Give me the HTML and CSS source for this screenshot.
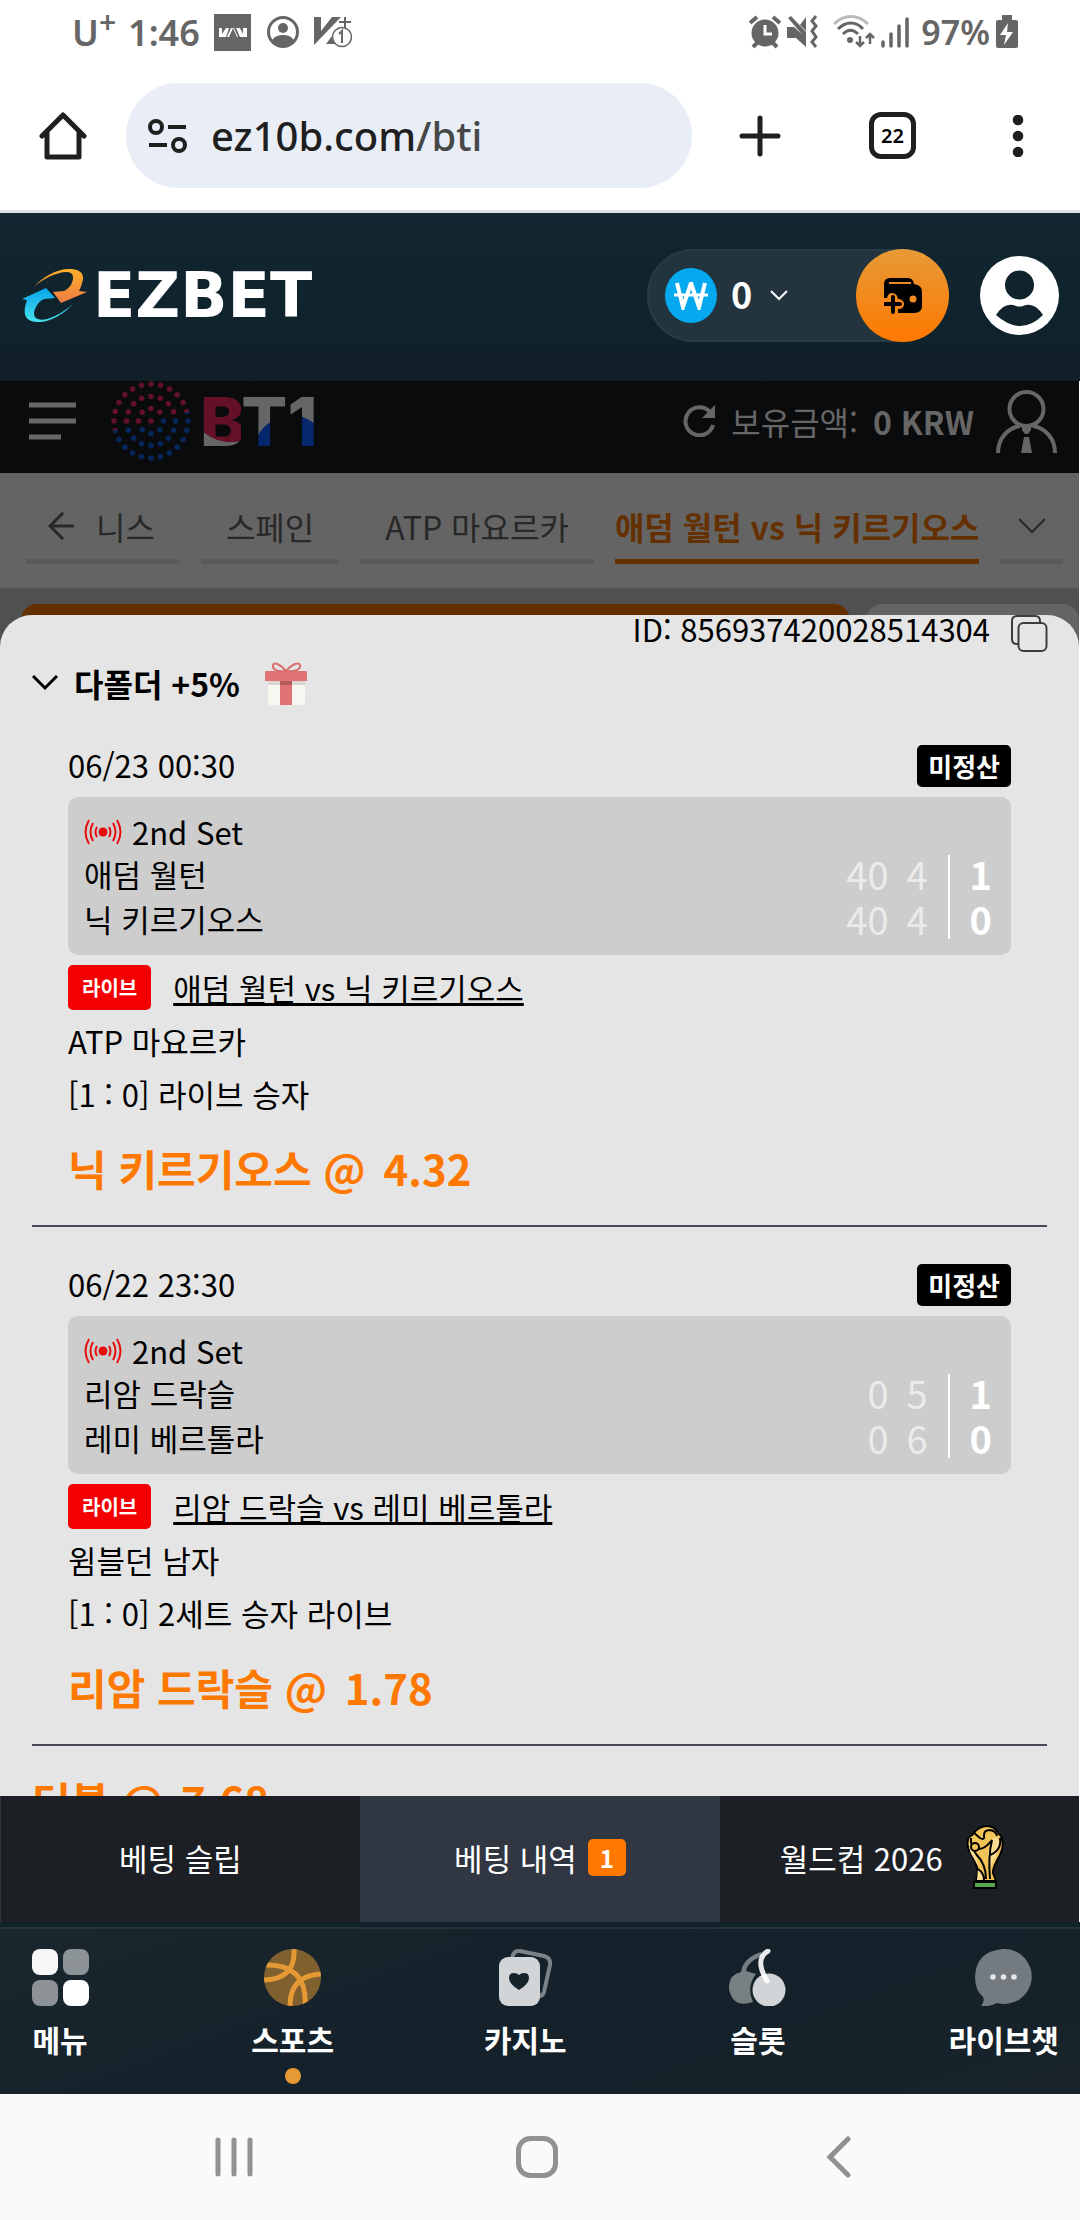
FILE: index.html
```html
<!DOCTYPE html>
<html lang="ko">
  <head>
    <meta charset="UTF-8" />
    <meta name="viewport" content="width=device-width, initial-scale=1" />
    <title>EZBET - 베팅 내역</title>
    <link rel="stylesheet" href="styles.css">
  </head>
  <body>
    <div class="status-bar">
      <div class="status-left">
        <span class="carrier">U<sup>+</sup></span>
        <span class="clock">1:46</span>
        <svg class="app-icon" width="37" height="37" viewBox="0 0 37 37"><path fill="#666" d="M0 0h37v37H0z"/><path fill="#fff" d="M5 14h3v6l4-6h3l-3 9H5zM17 14h3l4 9H13zM22 14h4l3 6v-6h4v9h-7z"/><path fill="#666" d="M19 14l4 9h-8z"/></svg>
        <svg class="person-icon" width="32" height="32" viewBox="0 0 32 32"><circle cx="16" cy="16" r="14.5" fill="none" stroke="#666" stroke-width="3"/><circle cx="16" cy="12" r="5" fill="#666"/><path fill="#666" d="M5 25c2-8 20-8 22 0-6 8-16 8-22 0z"/></svg>
        <svg class="v-icon" width="38" height="32" viewBox="0 0 38 32"><path fill="#666" d="M0 1h7v14L18 1h9L0 29zM12 28l9-12v12z"/><path stroke="#666" stroke-width="2" d="M31 1v11M25 6h12"/><circle cx="28" cy="21" r="9.5" fill="#fff" stroke="#666" stroke-width="1.5"/><path stroke="#666" stroke-width="2" fill="none" d="M25 18l3-3v12"/></svg>
      </div>
      <div class="status-right">
        <svg width="32" height="34" viewBox="0 0 32 34"><circle cx="16" cy="18" r="13.5" fill="#666"/><path stroke="#666" stroke-width="4" d="M1 8l7-6M31 8l-7-6M4 32l5-5M28 32l-5-5"/><path fill="none" stroke="#fff" stroke-width="3" d="M16 10v9h7"/></svg>
        <svg width="33" height="34" viewBox="0 0 33 34"><path fill="#666" d="M0 12h7l12 11v9L9 23H0zM19 2v14l-6-6zM1 3l3-2 15 16v7z"/><path fill="none" stroke="#666" stroke-width="3" d="M29 1l-4 5 4 5-4 5 4 6-4 5 4 5"/></svg>
        <svg class="wifi-icon" width="42" height="34" viewBox="0 0 42 34"><path fill="none" stroke="#bbb" stroke-width="3" d="M1 9c10-10 24-10 34 0"/><path fill="none" stroke="#666" stroke-width="3" d="M5 14c8-8 18-8 25 0M10 19c5-5 10-5 15 0"/><circle cx="17" cy="25" r="3" fill="#666"/><path fill="none" stroke="#666" stroke-width="2.5" d="M27 21v10M23 27l4 4 4-4M37 29V19M33 23l4-4 4 4"/></svg>
        <svg class="signal-icon" width="28" height="34" viewBox="0 0 28 34"><path stroke="#666" stroke-width="3.5" stroke-linecap="round" d="M2 27v4M10 19v12M18 11v20M26 4v27"/></svg>
        <span class="battery-text">97%</span>
        <svg width="22" height="34" viewBox="0 0 22 34"><path fill="#666" d="M6 0h10v5h4q2 0 2 2v24q0 2-2 2H2q-2 0-2-2V7q0-2 2-2h4z"/><path fill="#fff" d="M12 8L4 20h6L8 30l9-13h-6z"/></svg>
      </div>
    </div>

    <div class="browser-bar">
      <button class="icon-btn home-btn" aria-label="홈">
        <svg width="48" height="48" viewBox="0 0 48 48"><path fill="none" stroke="#1f1f1f" stroke-width="5" stroke-linecap="round" stroke-linejoin="round" d="M3 24L24 3l21 21M8 20v25h32V20"/></svg>
      </button>
      <div class="address">
        <svg width="40" height="34" viewBox="0 0 40 34"><g fill="none" stroke="#1f1f1f" stroke-width="4"><circle cx="8" cy="8" r="6"/><circle cx="31" cy="26" r="6"/><path d="M20 8h18M1 26h18"/></g></svg>
        <span class="url">ez10b.com<span class="url-path">/bti</span></span>
      </div>
      <button class="icon-btn plus-btn" aria-label="새 탭">
        <svg width="42" height="42" viewBox="0 0 42 42"><path stroke="#1f1f1f" stroke-width="5" stroke-linecap="round" d="M21 3v36M3 21h36"/></svg>
      </button>
      <button class="icon-btn tab-count" aria-label="탭 22개">22</button>
      <button class="icon-btn more-btn" aria-label="더보기">
        <svg width="12" height="42" viewBox="0 0 12 42"><g fill="#1f1f1f"><circle cx="6" cy="5" r="5.3"/><circle cx="6" cy="21" r="5.3"/><circle cx="6" cy="37" r="5.3"/></g></svg>
      </button>
    </div>

    <header class="site-header">
      <a class="logo" href="#">
        <svg width="65" height="53" viewBox="0 0 65 53">
          <defs>
            <linearGradient id="gold" x1="0" y1="0" x2="0" y2="1"><stop offset="0" stop-color="#ffb02a"/><stop offset="1" stop-color="#ee7a45"/></linearGradient>
            <linearGradient id="sky" x1="0" y1="0" x2="0" y2="1"><stop offset="0" stop-color="#08a5ec"/><stop offset="1" stop-color="#48e0ee"/></linearGradient>
          </defs>
          <path fill="url(#gold)" d="M12 18C22 6 38-1 50 0c10 1 13 7 10 14-1 4-2 6-3 8l8 1-26 11-8-11 11-1c5-2 9-8 9-13C52-3 26 5 12 18z"/>
          <path fill="url(#sky)" d="M0 30l24-11 9 10-11 1c-5 2-10 9-10 15 1 10 20 7 40-11C40 47 26 54 14 53 1 52 1 42 5 31z"/>
        </svg>
        <span class="logo-text">EZBET</span>
      </a>
      <div class="balance">
        <button class="currency">
          <span class="coin"><svg width="34" height="28" viewBox="0 0 34 28"><path fill="none" stroke="#fff" stroke-width="4" d="M3 1l6 24 8-24 8 24 6-24"/><path stroke="#fff" stroke-width="3" d="M0 13h34"/></svg></span>
          <span class="amount">0</span>
          <svg class="caret" width="18" height="12" viewBox="0 0 18 12"><path fill="none" stroke="#fff" stroke-width="2" d="M1 1l8 8 8-8"/></svg>
        </button>
        <button class="wallet" aria-label="입금">
          <svg width="38" height="36" viewBox="0 0 38 36"><path d="M0 20V6q0-6 6-6h18q5 0 6 6 8 1 8 8v14q0 7-8 7H14v-4h2q4-1 4-5t-5-5h-1q-1-6-6-6-4 0-5 5z"/><path fill="none" stroke="#ee8a25" stroke-width="2" d="M5 5h22"/><circle cx="29" cy="21" r="3.5" fill="#f28a22"/><path fill="none" stroke="#000" stroke-width="4" stroke-linecap="round" d="M9 19v15M1 26h15"/></svg>
        </button>
      </div>
      <button class="icon-btn" aria-label="내 정보">
        <svg width="79" height="79" viewBox="0 0 79 79"><circle cx="39.5" cy="39.5" r="39.5" fill="#fff"/><g fill="#11232c"><circle cx="39.5" cy="29" r="14.5"/><path d="M16 59q9-14 20-9 3 1 7 0 11-5 20 9-22 22-47 0z"/></g></svg>
      </button>
    </header>

    <main class="frame">
      <div class="bti-bar">
        <button class="icon-btn menu-btn" aria-label="메뉴">
          <svg width="47" height="38" viewBox="0 0 47 38"><path stroke="#666" stroke-width="5" d="M0 3h47M0 19h47M0 35h32"/></svg>
        </button>
        <svg class="globe" width="80" height="80" viewBox="0 0 80 80">
          <defs>
            <linearGradient id="globe" gradientUnits="userSpaceOnUse" x1="32" y1="8" x2="48" y2="72"><stop offset=".5" stop-color="#641127"/><stop offset=".5" stop-color="#06275c"/></linearGradient>
          </defs>
          <g fill="none" stroke="url(#globe)" stroke-width="5.5" stroke-linecap="round">
            <circle cx="40" cy="40" r="37" pathLength="24" stroke-dasharray="0 1"/>
            <circle cx="40" cy="40" r="24.5" pathLength="16" stroke-dasharray="0 1"/>
            <circle cx="40" cy="40" r="12.5" pathLength="8" stroke-dasharray="0 1"/>
          </g>
          <circle cx="40" cy="40" r="2.8" fill="#641127"/>
        </svg>
        <span class="bt-logo"><span class="bt-b">B</span><span class="bt-t">T</span><span class="bt-1">1</span></span>
        <div class="wallet-info">
          <button class="icon-btn" aria-label="새로고침">
            <svg width="33" height="32" viewBox="0 0 33 32"><path fill="none" stroke="#666" stroke-width="4" d="M30 20A14 14 0 1 1 27 7"/><path fill="#666" d="M32 0v13H19z"/></svg>
          </button>
          <span>보유금액:</span>
          <b>0 KRW</b>
        </div>
        <svg class="agent" width="61" height="63" viewBox="0 0 61 63"><g fill="none" stroke="#666" stroke-width="4"><circle cx="30.5" cy="19" r="17"/><path d="M2 63C2 48 12 38 24 36M59 63C59 48 49 38 37 36"/></g><path fill="#666" d="M26 36h9v4l-3 4h-3l-3-4zM28 47h5l3 16H25z"/></svg>
      </div>

      <nav class="leagues">
        <a class="league back" href="#"><svg width="26" height="28" viewBox="0 0 26 28"><path fill="none" stroke="#282828" stroke-width="3" d="M15 1L2 14l13 13M2 14h24"/></svg>니스</a>
        <a class="league" href="#">스페인</a>
        <a class="league" href="#">ATP 마요르카</a>
        <a class="league active" href="#">애덤 월턴 vs 닉 키르기오스</a>
        <button class="league expand" aria-label="더 보기"><svg width="28" height="16" viewBox="0 0 28 16"><path fill="none" stroke="#282828" stroke-width="2" d="M1 1l13 13L27 1"/></svg></button>
      </nav>
      <div class="markets">
        <div class="market selected"></div>
        <div class="market"></div>
      </div>

      <section class="sheet">
        <div class="bet-id">
          <span>ID: 856937420028514304</span>
          <button class="icon-btn" aria-label="복사">
            <svg width="37" height="37" viewBox="0 0 37 37"><g fill="none" stroke="#3c3c3c" stroke-width="2"><rect x="7.5" y="8" width="28" height="28" rx="5"/><path d="M7 29H6q-5 0-5-5V6q0-5 5-5h18q5 0 5 5v2"/></g></svg>
          </button>
        </div>
        <h2 class="bet-title">
          <svg width="26" height="16" viewBox="0 0 26 16"><path fill="none" stroke="#000" stroke-width="3" d="M1 1l12 12L25 1"/></svg>
          <span>다폴더 +5%</span>
          <svg class="gift" width="42" height="43" viewBox="0 0 42 43"><path fill="#f7f6f0" d="M3 19h37v22q0 2-2 2H5q-2 0-2-2z"/><path fill="#d9d5d2" d="M3 19h37v4H3z"/><path fill="#e07373" d="M1 9h40q1 0 1 1v9H0v-9q0-1 1-1zM15 19h12v24H15z"/><path fill="#b95a5a" d="M15 19h12v4H15z"/><path fill="none" stroke="#d97070" stroke-width="2" d="M21 9C16 3 9-1 8 3s3 7 13 6c10 1 15-2 14-6S26 3 21 9z"/></svg>
        </h2>

        <article class="bet">
          <div class="bet-top"><time>06/23 00:30</time><span class="state">미정산</span></div>
          <div class="score-card">
            <div class="set"><svg width="38" height="26" viewBox="0 0 38 26"><circle cx="19" cy="13" r="4.5" fill="#e80d0d"/><path fill="none" stroke="#e80d0d" stroke-width="2" d="M13 8q-3 5 0 10M9 4q-5 9 0 18M5 1q-7 12 0 24M25 8q3 5 0 10M29 4q5 9 0 18M33 1q7 12 0 24"/></svg>2nd Set</div>
            <div class="score-rows">
              <div class="teams"><p>애덤 월턴</p><p>닉 키르기오스</p></div>
              <div class="points"><span>40</span><span>4</span><span>40</span><span>4</span></div>
              <div class="sets"><span>1</span><span>0</span></div>
            </div>
          </div>
          <div class="match"><span class="live">라이브</span><a href="#">애덤 월턴 vs 닉 키르기오스</a></div>
          <div class="details"><p>ATP 마요르카</p><p>[1 : 0] 라이브 승자</p></div>
          <p class="odds">닉 키르기오스 @ <span>4.32</span></p>
        </article>

        <article class="bet">
          <div class="bet-top"><time>06/22 23:30</time><span class="state">미정산</span></div>
          <div class="score-card">
            <div class="set"><svg width="38" height="26" viewBox="0 0 38 26"><circle cx="19" cy="13" r="4.5" fill="#e80d0d"/><path fill="none" stroke="#e80d0d" stroke-width="2" d="M13 8q-3 5 0 10M9 4q-5 9 0 18M5 1q-7 12 0 24M25 8q3 5 0 10M29 4q5 9 0 18M33 1q7 12 0 24"/></svg>2nd Set</div>
            <div class="score-rows">
              <div class="teams"><p>리암 드락슬</p><p>레미 베르톨라</p></div>
              <div class="points"><span>0</span><span>5</span><span>0</span><span>6</span></div>
              <div class="sets"><span>1</span><span>0</span></div>
            </div>
          </div>
          <div class="match"><span class="live">라이브</span><a href="#">리암 드락슬 vs 레미 베르톨라</a></div>
          <div class="details"><p>윔블던 남자</p><p>[1 : 0] 2세트 승자 라이브</p></div>
          <p class="odds">리암 드락슬 @ <span>1.78</span></p>
        </article>
        <p class="odds total">더블 @ <span>7.68</span></p>
      </section>

      <div class="slip-tabs">
        <button>베팅 슬립</button>
        <button class="active">베팅 내역<span class="count">1</span></button>
        <button class="worldcup">월드컵 2026
          <svg width="38" height="64" viewBox="0 0 38 64"><path fill="#f2c357" stroke="#000" stroke-width="2" d="M3 12q3-1 5-4 5-7 13-7 7 0 11 7l3 3q4 9-1 19-8 14-7 18l3 8H10l2-8q0-6-7-20Q-1 20 3 12z"/><path fill="#f8dc91" d="M31 12q5 7 0 17l-8 16-1-17 5-15zM4 15q-3 8 3 17l5 9-1-7q-4-9-7-19zM12 44l-1 11h7q0-8-6-11z"/><g fill="none" stroke="#000" stroke-width="2"><path d="M7 7l7 6q5 3 4-3 0-5 6-5 6 1 7 6M13 24q6 0 13-9-4 16-2 39M5 13q-1 7 5 16 10 10 10 25M34 13q2 12-10 17M12 44q6 4 6 11"/><circle cx="9" cy="22" r="4" fill="#f2c357"/></g><path fill="#52a84b" stroke="#000" stroke-width="2" d="M8 57h22v6H8z"/></svg>
        </button>
      </div>
    </main>

    <nav class="bottom-nav">
      <a href="#">
        <svg width="57" height="57" viewBox="0 0 57 57"><g fill="#fff"><rect width="26" height="26" rx="8" opacity=".96"/><rect x="31" width="26" height="26" rx="8" opacity=".5"/><rect y="31" width="26" height="26" rx="8" opacity=".5"/><rect x="31" y="31" width="26" height="26" rx="8"/></g></svg>
        메뉴
      </a>
      <a class="current" href="#">
        <svg width="57" height="57" viewBox="0 0 57 57"><defs><clipPath id="ball"><circle cx="28.5" cy="28.5" r="28.5"/></clipPath></defs><circle cx="28.5" cy="28.5" r="28.5" fill="#80602f"/><g clip-path="url(#ball)" fill="none" stroke="#e59a35" stroke-width="5"><path d="M30 0q2 31-32 31M0 16q44-2 41 42M58 25q-33 1-32 34"/></g></svg>
        스포츠
      </a>
      <a href="#">
        <svg width="57" height="57" viewBox="0 0 57 57"><path fill="none" stroke="#7a8288" stroke-width="4" stroke-linecap="round" d="M15 10q1-9 8-8l24 5q7 2 6 9l-6 27q-1 4-5 4"/><rect x="2" y="8" width="41" height="49" rx="9" fill="#d1d5d7"/><path fill="#17232b" d="M22 41q-10-6-10-12 0-5 5-5 3 0 5 2 2-2 5-2 5 0 5 5 0 6-10 12z"/></svg>
        카지노
      </a>
      <a href="#">
        <svg width="57" height="57" viewBox="0 0 57 57"><path fill="#777f83" d="M12 23c2-12 11-17 20-20l1 4c-8 3-15 8-16 15l10 3q-10 13-3 28Q4 60 0 40-1 26 12 23z"/><circle cx="40" cy="41" r="16.5" fill="#d1d5d7"/><path fill="none" stroke="#fff" stroke-width="5" stroke-linecap="round" opacity=".9" d="M39 2q-14 8-1 30"/></svg>
        슬롯
      </a>
      <a href="#">
        <svg width="57" height="57" viewBox="0 0 57 57"><path fill="#747b80" d="M28 0a27.5 27.5 0 1 1-6 54q-8 4-16 3 4-5 2-9Q0 41 0 28 1 2 28 0z"/><g fill="#e4e6e7"><circle cx="18" cy="28" r="2.8"/><circle cx="28.5" cy="28" r="2.8"/><circle cx="39" cy="28" r="2.8"/></g></svg>
        라이브챗
      </a>
    </nav>

    <div class="system-nav">
      <button class="icon-btn" aria-label="최근 앱"><svg width="42" height="42" viewBox="0 0 42 42"><path stroke="#919191" stroke-width="5" stroke-linecap="round" d="M5 4v34M21 4v34M37 4v34"/></svg></button>
      <button class="icon-btn" aria-label="홈 화면"><svg width="42" height="42" viewBox="0 0 42 42"><rect x="2.5" y="2.5" width="37" height="37" rx="12" fill="none" stroke="#919191" stroke-width="5"/></svg></button>
      <button class="icon-btn" aria-label="뒤로"><svg width="42" height="42" viewBox="0 0 42 42"><path fill="none" stroke="#919191" stroke-width="5" stroke-linecap="round" d="M30 3L12 21l18 18"/></svg></button>
    </div>
  </body>
</html>
```
FILE: styles.css
```css
* {
  box-sizing: border-box;
}
body {
  font-family: "Noto Sans CJK KR", sans-serif;
  font-size: 31px;
  margin: 0;
  height: 100vh;
  display: flex;
  flex-direction: column;
  background-color: #fff;
  color: #000;
}
p,
h2 {
  margin: 0;
}
a {
  color: inherit;
  text-decoration: none;
}
button {
  font: inherit;
  color: inherit;
  background: none;
  border: none;
  padding: 0;
  cursor: pointer;
}
svg {
  display: block;
  flex: none;
}
.icon-btn {
  display: flex;
  flex: none;
}

/* phone status bar */
.status-bar {
  flex: none;
  display: flex;
  justify-content: space-between;
  height: 64px;
  padding: 0 62px 0 72px;
  font-family: "Noto Sans", sans-serif;
  font-size: 36px;
  font-weight: 600;
  color: #666;
}
.status-left,
.status-right {
  display: flex;
  align-items: center;
}
.status-right {
  gap: 6px;
}
.carrier sup {
  font-size: 30px;
  line-height: 0;
}
.clock {
  margin: 0 14px 0 12px;
}
.person-icon {
  margin: 0 15px 0 16px;
}
.wifi-icon {
  margin-left: 7px;
}
.signal-icon {
  margin-right: 6px;
}
.battery-text {
  font-size: 34px;
}

/* browser toolbar */
.browser-bar {
  flex: none;
  display: flex;
  align-items: center;
  height: 149px;
  padding: 0 56px 3px 39px;
  border-bottom: 3px solid #dae2ea;
}
.address {
  flex: 1;
  display: flex;
  align-items: center;
  gap: 23px;
  height: 105px;
  margin: 0 47px 0 39px;
  padding-left: 22px;
  border-radius: 53px;
  background-color: #e8edf6;
}
.url {
  font-family: "Noto Sans", sans-serif;
  font-size: 40px;
  font-weight: 500;
  color: #1f1f1f;
}
.url-path {
  color: #474747;
}
.tab-count {
  width: 47px;
  height: 47px;
  margin: 0 96px 0 88px;
  align-items: center;
  justify-content: center;
  border: 5px solid #1f1f1f;
  border-radius: 12px;
  font-family: "Noto Sans", sans-serif;
  font-size: 20px;
  font-weight: 600;
}

/* site header */
.site-header {
  flex: none;
  display: flex;
  align-items: center;
  height: 168px;
  padding: 0 21px 3px 22px;
  background: linear-gradient(#112630, #10232d 70%, #131f27);
}
.logo {
  display: flex;
  align-items: center;
  gap: 6px;
  margin-right: auto;
}
.logo-text {
  font-family: "DejaVu Sans", sans-serif;
  font-size: 62px;
  font-weight: bold;
  line-height: 60px;
  color: #fff;
}
.balance {
  display: flex;
  align-items: center;
  justify-content: space-between;
  width: 302px;
  height: 93px;
  margin-right: 31px;
  border-radius: 47px;
  background-color: #23343e;
  box-shadow: inset 0 0 0 2px #2b3b44;
}
.currency {
  display: flex;
  align-items: center;
  gap: 14px;
  padding-left: 18px;
  font-size: 36px;
  font-weight: 700;
  line-height: 50px;
  color: #fff;
}
.amount {
  padding-bottom: 6px;
}
.coin {
  display: flex;
  align-items: center;
  justify-content: center;
  width: 52px;
  height: 55px;
  border-radius: 50%;
  background-color: #04a9ef;
}
.caret {
  margin-left: 4px;
}
.wallet {
  display: flex;
  align-items: center;
  justify-content: center;
  width: 93px;
  height: 93px;
  border-radius: 50%;
  background: linear-gradient(#e69a38, #ff7800);
}

/* sportsbook frame */
.frame {
  flex: 1;
  min-height: 0;
  display: flex;
  flex-direction: column;
  margin-right: 1px;
  background-color: #505050;
}
.bti-bar {
  flex: none;
  display: flex;
  align-items: center;
  height: 92px;
  padding: 0 22px 12px 29px;
  background-color: #0a0b0d;
  color: #666;
}
.globe {
  margin: 0 9px 0 35px;
}
.bt-logo {
  font-family: Inter, sans-serif;
  font-size: 68px;
  font-weight: 800;
  line-height: 80px;
  color: transparent;
}
.bt-logo span {
  -webkit-background-clip: text;
  background-clip: text;
}
.bt-b {
  background-image: radial-gradient(circle at 75% 25%, #641127 60%, #666 61%);
}
.bt-t {
  background-image: radial-gradient(circle at 100% 85%, #04286b 38%, #666 39%);
}
.bt-1 {
  background-image: radial-gradient(circle at 0 95%, #04286b 52%, #666 53%);
}
.wallet-info {
  display: flex;
  align-items: center;
  gap: 15px;
  margin-left: auto;
  font-size: 32px;
  line-height: 76px;
  white-space: nowrap;
}
.agent {
  margin-left: 22px;
}
.leagues {
  flex: none;
  display: flex;
  gap: 21px;
  height: 116px;
  padding: 28px 16px 0 26px;
  border-bottom: 2px solid #5a5a5a;
  background-color: #646464;
  color: #282828;
  font-size: 32px;
  white-space: nowrap;
}
.league {
  display: flex;
  align-items: center;
  height: 63px;
  padding: 0 25px 8px;
  border-bottom: 5px solid #5a5a5a;
}
.league.back {
  gap: 22px;
  padding-left: 22px;
}
.league.active {
  padding: 0 0 8px;
  border-color: #653000;
  color: #653000;
  font-weight: bold;
}
.league.expand {
  flex: 1;
  justify-content: center;
  padding: 0 0 8px;
}
.markets {
  flex: none;
  display: flex;
  gap: 16px;
  height: 60px;
  padding: 15px 0 0 21px;
}
.market {
  flex: 10;
  border-radius: 16px 16px 0 0;
  background-color: #646464;
}
.market.selected {
  flex: 39;
  background-color: #653000;
}

/* bet history sheet */
.sheet {
  flex: 1;
  min-height: 0;
  margin-top: -34px;
  overflow: hidden;
  border-radius: 32px 32px 0 0;
  background-color: #e5e5e5;
}
.bet-id {
  display: flex;
  justify-content: flex-end;
  gap: 21px;
  height: 37px;
  padding-right: 31px;
  line-height: 27px;
}
.bet-title {
  display: flex;
  align-items: center;
  height: 42px;
  margin: 10px 32px 4px;
  font-size: 32px;
  line-height: 42px;
}
.bet-title span {
  margin: 0 25px 0 16px;
}
.bet {
  margin: 0 32px;
  padding: 37px 36px 27px;
  border-bottom: 2px solid #464d57;
}
.bet-top {
  display: flex;
  align-items: center;
  justify-content: space-between;
  height: 42px;
  line-height: 40px;
}
.bet-top time {
  padding-bottom: 2px;
}
.state {
  padding: 0 11px;
  border-radius: 5px;
  background-color: #000;
  color: #fff;
  font-size: 26px;
  font-weight: bold;
  line-height: 42px;
}
.score-card {
  margin: 10px 0;
  padding: 16px 16px 14px;
  border-radius: 10px;
  background-color: #cdcdcd;
}
.set {
  display: flex;
  align-items: center;
  gap: 10px;
  height: 38px;
  line-height: 36px;
}
.score-rows {
  display: flex;
  line-height: 45px;
}
.teams {
  flex: 1;
}
.points {
  display: grid;
  grid-template-columns: auto auto;
  column-gap: 18px;
  margin-right: 20px;
  font-size: 38px;
  color: #ebebeb;
  text-align: right;
}
.sets {
  display: flex;
  flex-direction: column;
  height: 84px;
  margin-top: 4px;
  padding: 0 3px 0 20px;
  border-left: 2px solid #fff;
  font-size: 38px;
  font-weight: bold;
  color: #fff;
}
.sets span {
  flex: none;
  height: 45px;
  line-height: 37px;
}
.match {
  display: flex;
  align-items: center;
  gap: 22px;
  height: 45px;
  line-height: 43px;
}
.match a {
  text-decoration: underline;
  text-decoration-thickness: 3px;
}
.live {
  padding: 0 14px;
  border-radius: 5px;
  background-color: #f40000;
  color: #fff;
  font-size: 20px;
  font-weight: bold;
  line-height: 45px;
}
.details {
  margin: 4px 0 18px;
  line-height: 53px;
}
.odds {
  color: #ff7800;
  font-size: 42px;
  font-weight: bold;
  line-height: 60px;
}
.odds span {
  margin-left: 6px;
}
.total {
  margin: 24px 32px 0;
}

.slip-tabs {
  flex: none;
  display: grid;
  grid-template-columns: repeat(3, 1fr);
  height: 126px;
  background-color: #1c1f24;
  color: #fff;
}
.slip-tabs button {
  display: flex;
  align-items: center;
  justify-content: center;
  gap: 11px;
  padding-bottom: 4px;
  border-left: 1px solid #303743;
}
.slip-tabs .active {
  background-color: #303743;
}
.slip-tabs .worldcup {
  gap: 23px;
  padding-right: 16px;
}
.count {
  width: 38px;
  border-radius: 5px;
  background-color: #ff7800;
  font-size: 24px;
  font-weight: bold;
  line-height: 37px;
}

/* bottom navigation */
.bottom-nav {
  flex: none;
  display: flex;
  justify-content: space-between;
  height: 172px;
  padding: 20px 21px 0 18px;
  border-top: 5px solid #12222a;
  box-shadow: inset 0 2px #26333b;
  background: linear-gradient(160deg, #1a272e, #14212a 50%, #18232a);
  color: #fff;
  font-size: 30px;
  font-weight: bold;
}
.bottom-nav a {
  display: flex;
  flex-direction: column;
  align-items: center;
  min-width: 84px;
  padding-top: 2px;
  line-height: 66px;
}
.current::after {
  content: "";
  width: 16px;
  height: 16px;
  margin-top: -4px;
  border-radius: 50%;
  background-color: #e59a35;
}

/* android keys */
.system-nav {
  flex: none;
  display: flex;
  align-items: center;
  justify-content: space-between;
  height: 126px;
  padding: 0 220px 0 213px;
  background-color: #fafafa;
}
```
